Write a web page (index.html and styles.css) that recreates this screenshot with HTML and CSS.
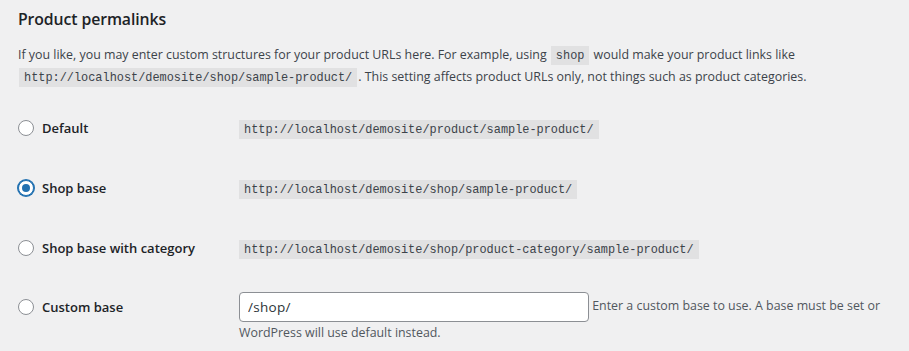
FILE: index.html
```html
<!DOCTYPE html>
<html lang="en">
<head>
<meta charset="utf-8">
<title>Product permalinks</title>
<link rel="stylesheet" href="styles.css">
</head>
<body>
<div class="wrap">
  <h2 class="title">Product permalinks</h2>
  <p class="intro">If you like, you may enter custom structures for your product URLs here. For example, using <code>shop</code> would make your product links like <code>http://localhost/demosite/shop/sample-product/</code>. This setting affects product URLs only, not things such as product categories.</p>
  <div class="form-table">
    <div class="row">
      <label class="th"><span class="radio"></span>Default</label>
      <div class="td"><code>http://localhost/demosite/product/sample-product/</code></div>
    </div>
    <div class="row">
      <label class="th"><span class="radio checked"></span>Shop base</label>
      <div class="td"><code>http://localhost/demosite/shop/sample-product/</code></div>
    </div>
    <div class="row">
      <label class="th"><span class="radio"></span>Shop base with category</label>
      <div class="td"><code>http://localhost/demosite/shop/product-category/sample-product/</code></div>
    </div>
    <div class="row row-custom">
      <label class="th"><span class="radio"></span>Custom base</label>
      <div class="td td-custom"><input class="text-input" type="text" value="/shop/"> <span class="description">Enter a custom base to use. A base must be set or WordPress will use default instead.</span></div>
    </div>
  </div>
</div>
</body>
</html>
```
FILE: styles.css
```css
html, body {
  margin: 0;
  padding: 0;
  background: #f0f0f1;
}
body {
  font-family: "Segoe UI", "Open Sans", "Noto Sans", sans-serif;
  font-size: 12.4px;
  color: #3c434a;
  overflow: hidden;
}
.wrap {
  padding: 0 0 0 18px;
}
.title {
  margin: 0;
  padding-top: 7px;
  font-size: 15.8px;
  font-weight: 600;
  color: #1d2327;
  line-height: 24px;
  letter-spacing: -0.1px;
}
.intro {
  margin: 14px 0 0 0;
  line-height: 19.5px;
  width: 820px;
}
code {
  font-family: "Liberation Mono", "DejaVu Sans Mono", monospace;
  font-size: 11.9px;
  background: #e1e1e2;
  color: #3c434a;
  padding: 3px 5px 2px 5px;
  margin: 0 1px;
}
.form-table {
  margin-top: 10px;
  display: flex;
  flex-direction: column;
}
.row {
  display: flex;
  align-items: center;
  height: 60px;
}
.th {
  width: 221px;
  flex: none;
  display: flex;
  align-items: center;
  font-weight: 600;
  color: #1d2327;
  font-size: 13px;
}
.radio {
  width: 14px;
  height: 14px;
  border: 1px solid #8c8f94;
  border-radius: 50%;
  background: #fff;
  margin-right: 8px;
  display: inline-flex;
  align-items: center;
  justify-content: center;
  flex: none;
}
.radio.checked {
  border-color: #2271b1;
  box-shadow: 0 0 0 1px #2271b1;
}
.radio.checked::before {
  content: "";
  width: 8px;
  height: 8px;
  border-radius: 50%;
  background: #2271b1;
}
.td code {
  margin: 0;
}
.row-custom {
  align-items: flex-start;
  padding-top: 14px;
  height: auto;
}
.row-custom .th {
  height: 30px;
}
.td-custom {
  width: 650px;
  line-height: 22px;
}
.text-input {
  box-sizing: border-box;
  width: 350px;
  height: 30px;
  border: 1px solid #8c8f94;
  border-radius: 4px;
  background: #fff;
  font-family: "Segoe UI", "Open Sans", "Noto Sans", sans-serif;
  font-size: 13.5px;
  letter-spacing: 0.3px;
  color: #2c3338;
  padding: 0 8px;
  vertical-align: middle;
  margin: 0;
}
.description {
  color: #50575e;
  font-size: 12.4px;
}
```
